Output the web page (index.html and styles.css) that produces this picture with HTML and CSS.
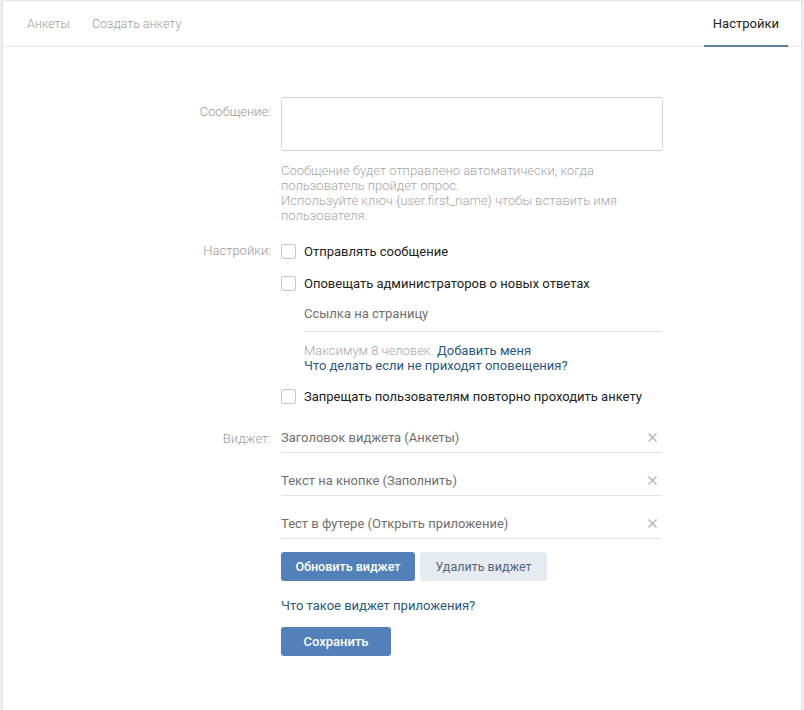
FILE: index.html
```html
<!DOCTYPE html>
<html lang="ru">
<head>
<meta charset="utf-8">
<title>Настройки</title>
<link rel="stylesheet" href="styles.css">
</head>
<body>
<div class="card">
  <div class="tabs">
    <a class="tab">Анкеты</a>
    <a class="tab">Создать анкету</a>
    <span class="spacer"></span>
    <a class="tab active">Настройки</a>
  </div>
  <div class="form">
    <div class="row row-message">
      <div class="label label-top">Сообщение:</div>
      <div class="field">
        <textarea class="textarea"></textarea>
        <div class="hint">Сообщение будет отправлено автоматически, когда пользователь пройдет опрос.<br>Используйте ключ {user.first_name} чтобы вставить имя пользователя.</div>
      </div>
    </div>

    <div class="row row-settings">
      <div class="label label-check">Настройки:</div>
      <div class="field">
        <div class="check"><span class="box"></span><span>Отправлять сообщение</span></div>
        <div class="check"><span class="box"></span><span>Оповещать администраторов о новых ответах</span></div>
        <div class="sub">
          <input class="line-input sub-input" placeholder="Ссылка на страницу">
          <div class="sub-hint"><span class="muted">Максимум 8 человек.</span> <a class="link">Добавить меня</a><br><a class="link">Что делать если не приходят оповещения?</a></div>
        </div>
        <div class="check"><span class="box"></span><span>Запрещать пользователям повторно проходить анкету</span></div>
      </div>
    </div>

    <div class="row row-widget">
      <div class="label label-widget">Виджет:</div>
      <div class="field">
        <div class="wrow"><input class="line-input" placeholder="Заголовок виджета (Анкеты)"><svg class="x" width="9" height="9" viewBox="0 0 9 9"><path d="M0.5 0.5L8.5 8.5M8.5 0.5L0.5 8.5" stroke="#a9b4c0" stroke-width="1.3" fill="none"/></svg></div>
        <div class="wrow"><input class="line-input" placeholder="Текст на кнопке (Заполнить)"><svg class="x" width="9" height="9" viewBox="0 0 9 9"><path d="M0.5 0.5L8.5 8.5M8.5 0.5L0.5 8.5" stroke="#a9b4c0" stroke-width="1.3" fill="none"/></svg></div>
        <div class="wrow"><input class="line-input" placeholder="Тест в футере (Открыть приложение)"><svg class="x" width="9" height="9" viewBox="0 0 9 9"><path d="M0.5 0.5L8.5 8.5M8.5 0.5L0.5 8.5" stroke="#a9b4c0" stroke-width="1.3" fill="none"/></svg></div>
        <div class="buttons">
          <button class="btn btn-primary btn-update">Обновить виджет</button>
          <button class="btn btn-secondary">Удалить виджет</button>
        </div>
        <a class="link widget-link">Что такое виджет приложения?</a>
        <button class="btn btn-primary btn-save">Сохранить</button>
      </div>
    </div>
  </div>
</div>
</body>
</html>
```
FILE: styles.css
```css
html, body {
  margin: 0;
  padding: 0;
}
body {
  background: #edeef0;
  font-family: Roboto, "Open Sans", "Liberation Sans", sans-serif;
  font-size: 13px;
  color: #222;
  height: 710px;
  overflow: hidden;
}
.card {
  margin-left: 2px;
  width: 798px;
  min-height: 720px;
  background: #fff;
  border: 1px solid #e3e4e8;
  border-bottom: none;
}
.tabs {
  height: 45px;
  border-bottom: 1px solid #e7e8ec;
  display: flex;
  align-items: stretch;
  padding: 0 13px 0 13px;
}
.tab {
  display: flex;
  align-items: center;
  padding: 1px 11px 0 11px;
  color: #9a9a9a;
  font-size: 12.5px;
  font-weight: 300;
  border-bottom: 2px solid transparent;
  margin-bottom: -1px;
}
.tab.active {
  color: #222;
  font-size: 13px;
  font-weight: 400;
  border-bottom-color: #5f7f9b;
  padding: 1px 9px 0 9px;
}
.spacer {
  flex: 1;
}
.form {
  padding-top: 50px;
}
.row {
  display: flex;
  column-gap: 10px;
}
.label {
  width: 268px;
  flex: none;
  text-align: right;
  color: #9a9a9a;
  font-weight: 300;
  line-height: 15px;
}
.label-top {
  padding-top: 7px;
}
.label-check {
  padding-top: 1px;
}
.label-widget {
  padding-top: 8px;
}
.field {
  width: 382px;
  flex: none;
  display: flex;
  flex-direction: column;
  align-items: flex-start;
}
.textarea {
  box-sizing: border-box;
  width: 382px;
  height: 54px;
  border: 1px solid #d3d9de;
  border-radius: 2px;
  resize: none;
  margin: 0;
  padding: 6px 9px;
  font-family: inherit;
  font-size: 13px;
  display: block;
}
.hint {
  margin-top: 12px;
  color: #a5a5a5;
  font-weight: 300;
  line-height: 15px;
  width: 340px;
}
.row-settings {
  margin-top: 19px;
}
.check {
  display: flex;
  align-items: center;
  height: 18px;
  margin-bottom: 14px;
  color: #222;
}
.box {
  width: 13px;
  height: 13px;
  border: 1px solid #c1c9d1;
  border-radius: 2px;
  margin-right: 8px;
  flex: none;
}
.sub {
  margin-left: 23px;
  width: 357px;
  margin-top: -11px;
  margin-bottom: 14px;
}
.line-input {
  box-sizing: border-box;
  border: none;
  border-bottom: 1px solid #dfe2e6;
  outline: none;
  margin: 0;
  padding: 0;
  font-family: inherit;
  font-size: 13px;
  color: #222;
  background: transparent;
  display: block;
  width: 100%;
}
.line-input::placeholder {
  color: #6f6f6f;
  opacity: 1;
}
.sub-input {
  height: 37px;
}
.sub-hint {
  margin-top: 11px;
  line-height: 15px;
}
.muted {
  color: #a5a5a5;
  font-weight: 300;
}
.link {
  color: #2a5885;
  text-decoration: none;
}
.row-widget {
  margin-top: 4px;
}
.wrow {
  position: relative;
  width: 380px;
  margin-bottom: 13px;
}
.wrow .line-input {
  height: 30px;
  padding-right: 24px;
}
.x {
  position: absolute;
  right: 4px;
  top: 10px;
}
.buttons {
  display: flex;
  gap: 5px;
  margin-top: 0;
}
.btn {
  font-family: inherit;
  font-size: 12.5px;
  border: none;
  border-radius: 3px;
  height: 29px;
  padding: 0;
  cursor: pointer;
  margin: 0;
  white-space: nowrap;
  text-align: center;
}
.btn-primary {
  background: #5181b8;
  color: #fff;
  font-weight: 500;
}
.btn-update {
  width: 134px;
}
.btn-secondary {
  background: #e5ebf1;
  color: #55677d;
  width: 127px;
}
.widget-link {
  margin-top: 17px;
  line-height: 15px;
}
.btn-save {
  margin-top: 14px;
  width: 110px;
  font-size: 13px;
}
```
